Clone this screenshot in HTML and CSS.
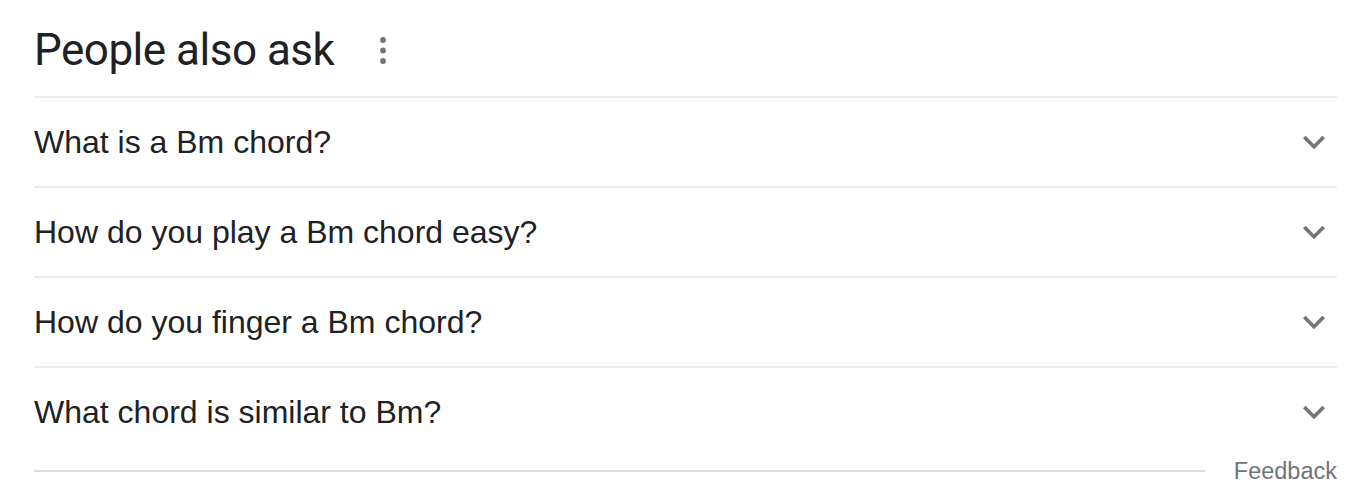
FILE: index.html
```html
<!DOCTYPE html>
<html>
<head>
<meta charset="utf-8">
<link rel="stylesheet" href="styles.css">
</head>
<body>
<div class="paa">
  <div class="paa-head">
    <h2 class="paa-title">People also ask</h2>
    <svg class="paa-more" width="12" height="34" viewBox="0 0 12 34"><circle cx="6" cy="4" r="2.9"/><circle cx="6" cy="14.5" r="2.9"/><circle cx="6" cy="25" r="2.9"/></svg>
  </div>
  <div class="paa-row"><span class="paa-q">What is a Bm chord?</span><svg class="paa-chev" width="44" height="44" viewBox="0 0 24 24"><path d="M16.59 8.59L12 13.17 7.41 8.59 6 10l6 6 6-6z"/></svg></div>
  <div class="paa-row"><span class="paa-q">How do you play a Bm chord easy?</span><svg class="paa-chev" width="44" height="44" viewBox="0 0 24 24"><path d="M16.59 8.59L12 13.17 7.41 8.59 6 10l6 6 6-6z"/></svg></div>
  <div class="paa-row"><span class="paa-q">How do you finger a Bm chord?</span><svg class="paa-chev" width="44" height="44" viewBox="0 0 24 24"><path d="M16.59 8.59L12 13.17 7.41 8.59 6 10l6 6 6-6z"/></svg></div>
  <div class="paa-row"><span class="paa-q">What chord is similar to Bm?</span><svg class="paa-chev" width="44" height="44" viewBox="0 0 24 24"><path d="M16.59 8.59L12 13.17 7.41 8.59 6 10l6 6 6-6z"/></svg></div>
  <div class="paa-foot">
    <div class="paa-line"></div>
    <span class="paa-feedback">Feedback</span>
  </div>
</div>
</body>
</html>
```
FILE: styles.css
```css
html, body {
  margin: 0;
  padding: 0;
  background: #fff;
}
.paa {
  margin-left: 34px;
  width: 1303px;
}
.paa-head {
  height: 96px;
  display: flex;
  align-items: center;
}
.paa-title {
  margin: 0;
  font-family: Roboto, "Open Sans", sans-serif;
  font-weight: 400;
  font-size: 44px;
  line-height: 52px;
  letter-spacing: -0.5px;
  color: #202124;
  margin-top: 4px;
}
.paa-more {
  fill: #70757a;
  margin-left: 43px;
  margin-top: 10px;
}
.paa-row {
  height: 88px;
  border-top: 2px solid #ebebeb;
  display: flex;
  align-items: center;
  justify-content: space-between;
}
.paa-q {
  font-family: "Liberation Sans", Arial, sans-serif;
  font-size: 32px;
  color: #202124;
}
.paa-chev {
  fill: #70757a;
  margin-right: 1px;
}
.paa-foot {
  display: flex;
  align-items: center;
  height: 30px;
}
.paa-line {
  flex: 1;
  height: 2px;
  background: #dadce0;
}
.paa-feedback {
  margin-left: 29px;
  font-family: "Liberation Sans", Arial, sans-serif;
  font-size: 23.5px;
  color: #70757a;
}
```
